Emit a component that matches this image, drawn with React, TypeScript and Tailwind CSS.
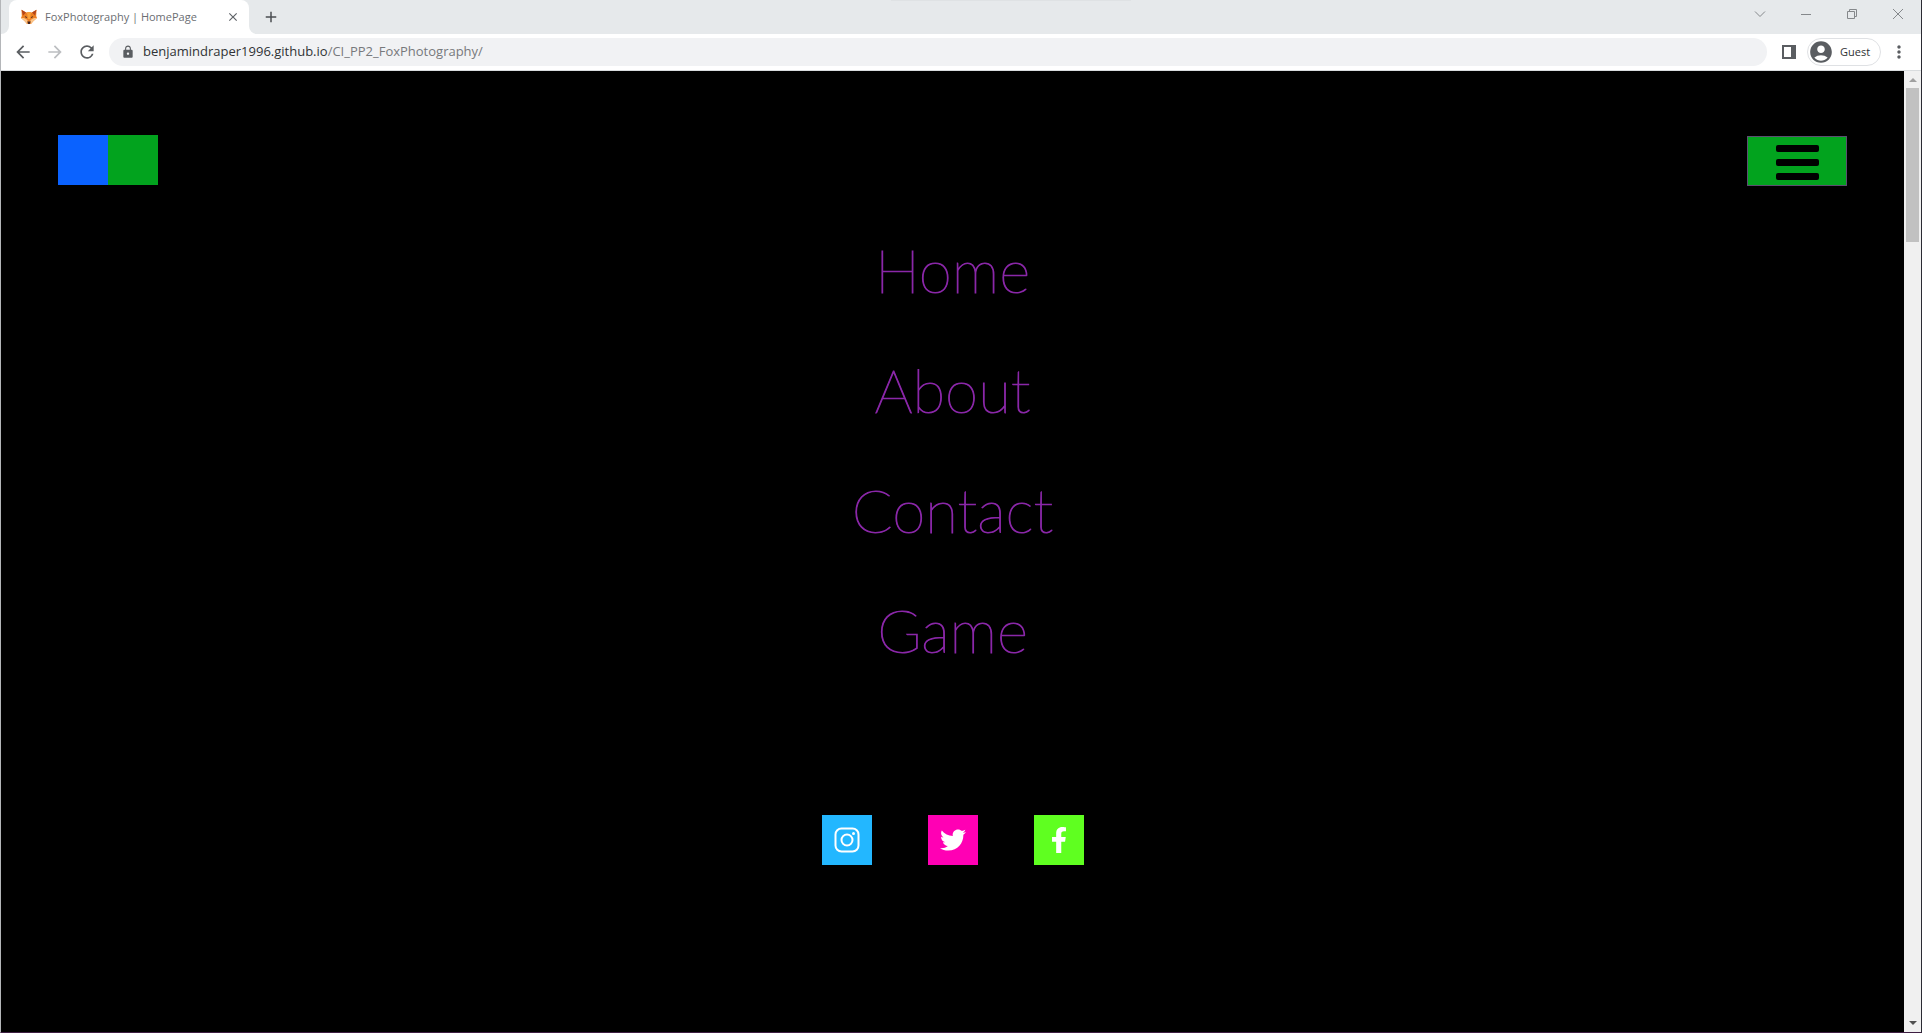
import React from 'react';
import { MdArrowBack, MdArrowForward, MdRefresh, MdLock, MdClose, MdAdd, MdAccountCircle, MdMoreVert } from 'react-icons/md';
import { FaTwitter, FaFacebookF } from 'react-icons/fa';

const links = ['Home', 'About', 'Contact', 'Game'];

function FoxIcon() {
  return (
    <svg viewBox="0 0 16 16" className="size-4 shrink-0" aria-hidden="true">
      <path d="M0.5 0.8 5 3.5 8 3 11 3.5 15.5 0.8 15.2 7 16 9 12.5 12 10 15H6L3.5 12 0 9 0.8 7Z" fill="#ec7f22" />
      <path d="M0.5 0.8 5 3.5 2 6.5Z M15.5 0.8 11 3.5 14 6.5Z" fill="#b4451a" />
      <path d="M0 9 3 9 6.5 11 6.5 15 3.5 12Z M16 9 13 9 9.5 11 9.5 15 12.5 12Z" fill="#fbc58a" />
      <path d="M6 3.3H10L9 10H7Z" fill="#f9a33b" />
      <path d="M6.3 12.5H9.7L8.8 15H7.2Z M3.8 7 6.3 8.3 5 8.9Z M12.2 7 9.7 8.3 11 8.9Z" fill="#3b2222" />
    </svg>
  );
}

function TabStrip() {
  return (
    <div className="flex h-[34px] items-stretch bg-[#e6e9eb]">
      <div className="flex w-2 items-end bg-white">
        <span className="h-full w-2 rounded-br-lg bg-[#e6e9eb]" />
      </div>
      <div className="flex w-60 items-center rounded-t-lg bg-white pl-3 pr-2">
        <FoxIcon />
        <span className="ml-2 flex-1 whitespace-nowrap text-[11px] text-[#6b6e72]">FoxPhotography | HomePage</span>
        <button type="button" aria-label="Close tab" className="flex size-4 items-center justify-center text-[#5f6368]">
          <MdClose className="size-3.5" />
        </button>
      </div>
      <div className="flex w-2 items-end bg-white">
        <span className="h-full w-2 rounded-bl-lg bg-[#e6e9eb]" />
      </div>
      <button type="button" aria-label="New tab" className="flex w-7 items-center justify-center text-[#4b4e52]">
        <MdAdd className="size-[18px]" />
      </button>
      <div className="flex flex-1 justify-center">
        <span className="h-px w-60 bg-[#dfe2e4]" />
      </div>
      <div className="flex h-7 text-[#85888b]">
        <button type="button" aria-label="Search tabs" className="flex w-[46px] items-center justify-center">
          <svg viewBox="0 0 12 12" className="size-3" fill="none" stroke="currentColor"><path d="M1 3.5 6 8.5 11 3.5" /></svg>
        </button>
        <button type="button" aria-label="Minimize" className="flex w-[46px] items-center justify-center">
          <svg viewBox="0 0 10 10" className="size-2.5" fill="none" stroke="currentColor"><path d="M0 5.5H10" /></svg>
        </button>
        <button type="button" aria-label="Restore" className="flex w-[46px] items-center justify-center">
          <svg viewBox="0 0 10 10" className="size-2.5" fill="none" stroke="currentColor"><path d="M.5 2.5H7.5V9.5H.5ZM2.5 2.5V.5H9.5V7.5H7.5" /></svg>
        </button>
        <button type="button" aria-label="Close window" className="flex w-[46px] items-center justify-center">
          <svg viewBox="0 0 10 10" className="size-2.5" fill="none" stroke="currentColor"><path d="M0 0 10 10M10 0 0 10" /></svg>
        </button>
      </div>
    </div>
  );
}

function Toolbar() {
  return (
    <div className="flex h-[37px] items-center border-b border-[#d9dcde] bg-white pl-3 text-[#5a5d61]">
      <button type="button" aria-label="Back" className="flex w-5 justify-center"><MdArrowBack className="size-5" /></button>
      <button type="button" aria-label="Forward" className="ml-3 flex w-5 justify-center text-[#bcbec1]"><MdArrowForward className="size-5" /></button>
      <button type="button" aria-label="Reload" className="ml-3 flex w-5 justify-center"><MdRefresh className="size-5" /></button>
      <div className="ml-3 flex h-7 flex-1 items-center rounded-full bg-[#f1f2f4] pl-3 text-[13px]">
        <MdLock className="size-3.5" />
        <span className="ml-2 whitespace-nowrap text-[#77797c]">
          <span className="text-[#303235]">benjamindraper1996.github.io</span>/CI_PP2_FoxPhotography/
        </span>
      </div>
      <button type="button" aria-label="Side panel" className="ml-[15px]">
        <svg viewBox="0 0 14 14" className="size-3.5"><path fill="currentColor" fillRule="evenodd" d="M0 0H14V14H0ZM2 2V12H9V2Z" /></svg>
      </button>
      <button type="button" className="ml-[11px] flex h-7 w-[74px] items-center gap-1.5 rounded-full border border-[#dfe1e4] text-[#303235]">
        <MdAccountCircle className="size-[26px] text-[#5a5d61]" />
        <span className="text-[11px]">Guest</span>
      </button>
      <button type="button" aria-label="Browser menu" className="ml-2 mr-3"><MdMoreVert className="size-5" /></button>
    </div>
  );
}

function SitePage() {
  return (
    <main className="flex-1 bg-black px-[57px] pt-16">
      <header className="flex items-start justify-between">
        <div className="flex">
          <span className="size-[50px] bg-[#0a62ff]" />
          <span className="size-[50px] bg-[#02a31e]" />
        </div>
        <button type="button" aria-label="Menu" className="mt-px flex h-[50px] w-[100px] items-center justify-center border border-[#5b4f70] bg-[#02a31e] pt-0.5">
          <span className="flex w-[43px] flex-col gap-[7px]">
            <span className="h-[7px] rounded-xs bg-black" />
            <span className="h-[7px] rounded-xs bg-black" />
            <span className="h-[7px] rounded-xs bg-black" />
          </span>
        </button>
      </header>
      <nav className="mt-6 flex flex-col items-center">
        {links.map((name) => (
          <a
            key={name}
            href="#"
            className="font-['Lato',sans-serif] text-[60px] font-thin leading-[120px] text-[#8a27a8] [-webkit-text-stroke:1px_#8a27a8]"
          >
            {name}
          </a>
        ))}
      </nav>
      <div className="mt-[125px] flex justify-center gap-14 text-white">
        <a href="#" aria-label="Instagram" className="flex size-[50px] items-center justify-center bg-[#23b7ff]">
          <svg viewBox="0 0 26 26" className="size-[26px]" fill="none" stroke="currentColor" strokeWidth="2">
            <rect x="1.5" y="1.5" width="23" height="23" rx="6" />
            <circle cx="13" cy="13" r="5.5" />
            <circle cx="19.5" cy="6.5" r="1.5" fill="currentColor" stroke="none" />
          </svg>
        </a>
        <a href="#" aria-label="Twitter" className="flex size-[50px] items-center justify-center bg-[#ff00b4]">
          <FaTwitter className="size-[26px]" />
        </a>
        <a href="#" aria-label="Facebook" className="flex size-[50px] items-center justify-center bg-[#5fff20]">
          <FaFacebookF className="size-[26px]" />
        </a>
      </div>
    </main>
  );
}

function Scrollbar() {
  return (
    <div className="flex w-[17px] flex-col items-center bg-[#f0f0f0]" aria-hidden="true">
      <svg viewBox="0 0 8 4" className="mb-1.5 mt-[7px] h-1 w-2"><path d="M0 4 4 0 8 4Z" fill="#a0a0a0" /></svg>
      <span className="h-[154px] w-[13px] bg-[#c1c1c1]" />
      <svg viewBox="0 0 8 4" className="mb-[7px] mt-auto h-1 w-2"><path d="M0 0 4 4 8 0Z" fill="#505050" /></svg>
    </div>
  );
}

export default function App() {
  return (
    <div className="flex min-h-screen flex-col border-x border-b border-b-[#3e1e42] border-l-[#b4b6b9] border-r-[#2b2b33] bg-white font-['Open_Sans','Noto_Sans',sans-serif]">
      <TabStrip />
      <Toolbar />
      <div className="flex flex-1">
        <SitePage />
        <Scrollbar />
      </div>
    </div>
  );
}
